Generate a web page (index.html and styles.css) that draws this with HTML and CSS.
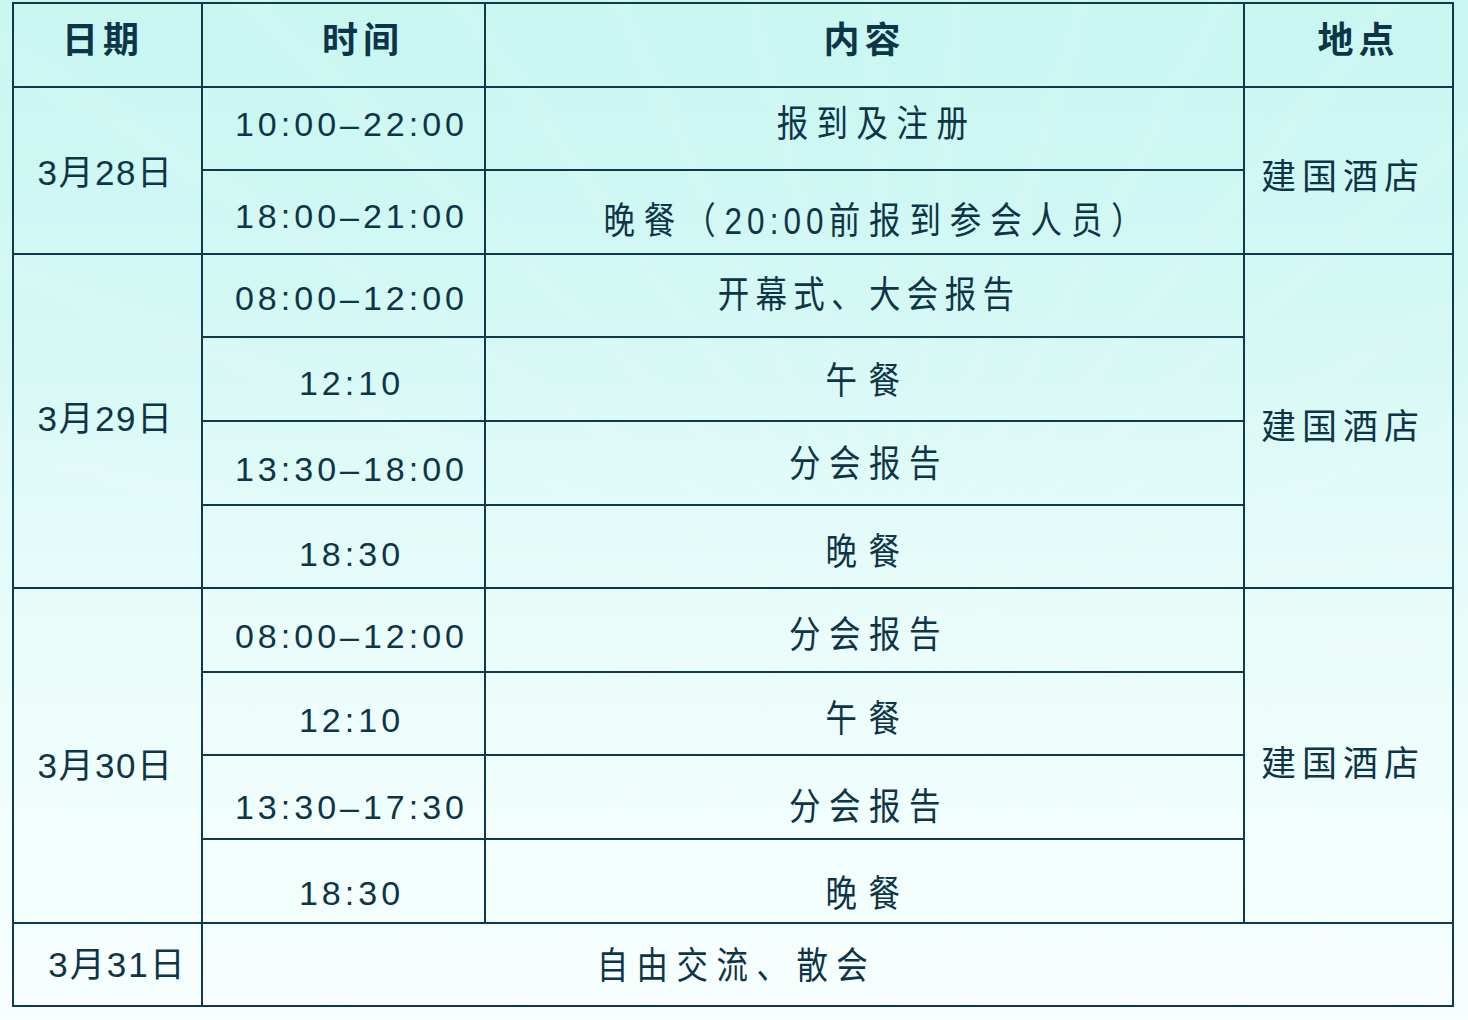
FILE: index.html
```html
<!DOCTYPE html>
<html lang="zh-CN">
<head>
<meta charset="utf-8">
<title>会议日程</title>
<link rel="stylesheet" href="styles.css">
</head>
<body>
<table class="schedule">
  <colgroup>
    <col class="c-date"><col class="c-time"><col class="c-content"><col class="c-place">
  </colgroup>
  <thead>
    <tr>
      <th class="h-date">日期</th>
      <th class="h-time">时间</th>
      <th class="h-content">内容</th>
      <th class="h-place">地点</th>
    </tr>
  </thead>
  <tbody>
    <tr>
      <td class="date v2" rowspan="2">3月28日</td>
      <td class="time vm4">10:00–22:00</td>
      <td class="content vm4 sh12"><span class="sq">报到及注册</span></td>
      <td class="place v6" rowspan="2">建国酒店</td>
    </tr>
    <tr>
      <td class="time v4">18:00–21:00</td>
      <td class="content v10 sh-note"><span class="sq note">晚餐（<span class="num">20:00</span>前报到参会人员）</span></td>
    </tr>
    <tr>
      <td class="date vm2" rowspan="4">3月29日</td>
      <td class="time v2">08:00–12:00</td>
      <td class="content v0"><span class="sq tight">开幕式、大会报告</span></td>
      <td class="place v6" rowspan="4">建国酒店</td>
    </tr>
    <tr>
      <td class="time v4">12:10</td>
      <td class="content v2"><span class="sq wide">午餐</span></td>
    </tr>
    <tr>
      <td class="time v6">13:30–18:00</td>
      <td class="content v2"><span class="sq">分会报告</span></td>
    </tr>
    <tr>
      <td class="time v8">18:30</td>
      <td class="content v6"><span class="sq wide">晚餐</span></td>
    </tr>
    <tr>
      <td class="date v10" rowspan="4">3月30日</td>
      <td class="time v6">08:00–12:00</td>
      <td class="content v6"><span class="sq">分会报告</span></td>
      <td class="place v8" rowspan="4">建国酒店</td>
    </tr>
    <tr>
      <td class="time v6">12:10</td>
      <td class="content v6"><span class="sq wide">午餐</span></td>
    </tr>
    <tr>
      <td class="time v10">13:30–17:30</td>
      <td class="content v10"><span class="sq">分会报告</span></td>
    </tr>
    <tr>
      <td class="time v12">18:30</td>
      <td class="content v14"><span class="sq wide">晚餐</span></td>
    </tr>
    <tr>
      <td class="date last v0">3月31日</td>
      <td class="content closing v2" colspan="3"><span class="sq">自由交流、散会</span></td>
    </tr>
  </tbody>
</table>
</body>
</html>
```

FILE: styles.css
```css
html, body {
  margin: 0;
  padding: 0;
}
body {
  width: 1468px;
  height: 1020px;
  overflow: hidden;
  padding: 2px 0 0 12px;
  box-sizing: border-box;
  color: #0d3548;
  font-family: "Liberation Sans", "Noto Sans CJK SC", sans-serif;
  background:
    repeating-conic-gradient(from 0deg at 900px 620px,
      rgba(255,255,255,0) 0deg 4deg,
      rgba(255,255,255,0.08) 5deg 6deg,
      rgba(255,255,255,0) 7deg 11deg),
    linear-gradient(180deg, #c8f6f1 0%, #d4f8f4 30%, #e8fcfa 60%, #f8fffe 100%);
}
.schedule {
  border-collapse: collapse;
  table-layout: fixed;
  width: 1440px;
  height: 1004px;
}
.c-date { width: 189px; }
.c-time { width: 283px; }
.c-content { width: 759px; }
.c-place { width: 209px; }

th, td {
  border: 2px solid #0f3a4e;
  padding: 0;
  text-align: center;
  vertical-align: middle;
  line-height: 1;
  white-space: nowrap;
}
tr { height: 83.6px; }

th {
  font-weight: 700;
  font-size: 36px;
  letter-spacing: 5px;
  padding-bottom: 8px;
}
th.h-date { padding-right: 9px; }
th.h-time { padding-left: 39px; }
th.h-place { padding-left: 20px; }

td.date {
  font-size: 35px;
  letter-spacing: 1.5px;
  padding-right: 4px;
}
td.date.last {
  letter-spacing: 2px;
  padding-right: 0;
  padding-left: 20px;
}
td.time {
  font-size: 34px;
  letter-spacing: 4px;
  padding-left: 16px;
}
td.content {
  font-size: 37px;
  padding-left: 8px;
}
td.content.sh12 { padding-left: 24px; }
td.content.sh-note { padding-left: 26px; }
td.content.closing { padding-left: 0; padding-right: 182px; }
.sq {
  display: inline-block;
  letter-spacing: 10px;
  transform: scaleX(0.85);
}
.sq.tight { letter-spacing: 7.5px; }
.sq.wide { letter-spacing: 13.5px; }
.sq.note { letter-spacing: 10.5px; }
.num { letter-spacing: 6px; }
td.place {
  font-size: 35px;
  letter-spacing: 6px;
  padding-right: 11px;
}

/* vertical nudges: text centre offset from cell centre */
td.vm4 { padding-bottom: 8px; }
td.vm2 { padding-bottom: 4px; }
td.v0 { padding-top: 0; }
td.v2 { padding-top: 4px; }
td.v4 { padding-top: 8px; }
td.v6 { padding-top: 12px; }
td.v8 { padding-top: 16px; }
td.v10 { padding-top: 20px; }
td.v12 { padding-top: 24px; }
td.v14 { padding-top: 28px; }
```
